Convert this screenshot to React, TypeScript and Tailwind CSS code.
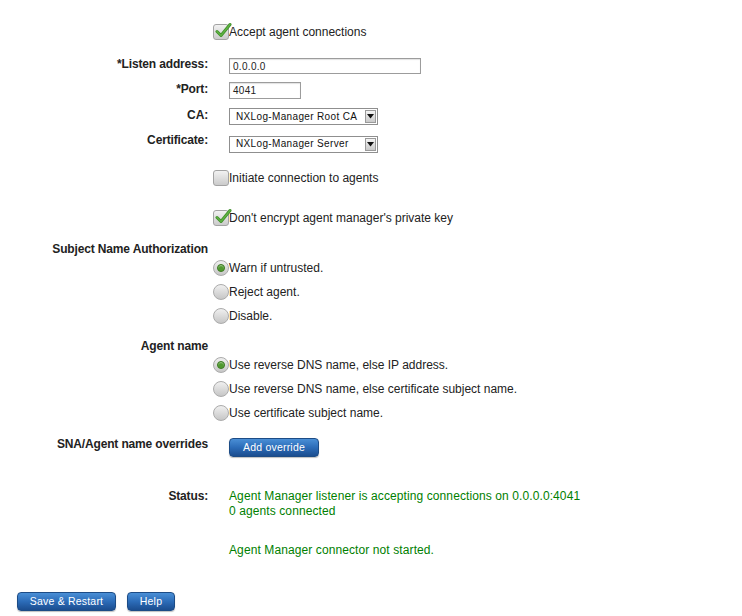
import type { ReactNode } from "react"

const font = { fontFamily: '"Liberation Sans", Arial, sans-serif' }

function Check({ checked }: { checked?: boolean }) {
  return (
    <span className="relative inline-block w-4 h-4 shrink-0 rounded-[3px] border border-[#a3a3a3] bg-gradient-to-b from-[#f2f2f2] to-[#cbcbcb]">
      {checked && (
        <svg className="absolute -top-[3px] left-[1px]" width="17" height="17" viewBox="0 0 17 17">
          <path d="M2 9.5 L6 13.5 L15 2.5" fill="none" stroke="#3f8f2a" strokeWidth="3" strokeLinecap="round" strokeLinejoin="round" />
          <path d="M2 9.5 L6 13.5 L15 2.5" fill="none" stroke="#5fb343" strokeWidth="1.3" strokeLinecap="round" strokeLinejoin="round" />
        </svg>
      )}
    </span>
  )
}

function Radio({ checked }: { checked?: boolean }) {
  return (
    <span className="inline-flex items-center justify-center w-4 h-4 shrink-0 rounded-full border border-[#ababab] bg-gradient-to-b from-[#f0f0f0] to-[#c6c6c6]">
      {checked && (
        <span className="w-[8px] h-[8px] rounded-full bg-[#4f9a2e] border border-[#3d7a24] shadow-[inset_0_1px_1px_rgba(255,255,255,0.5)]" />
      )}
    </span>
  )
}

function Row({ label, children, className = "", top = "" }: { label?: string; children?: ReactNode; className?: string; top?: string }) {
  return (
    <div className={`flex items-center ${className}`}>
      <div className={`w-[208px] shrink-0 text-right font-bold text-[12px] tracking-[-0.15px] text-[#222] ${top}`}>{label}</div>
      <div className="pl-[5px] flex items-center">{children}</div>
    </div>
  )
}

function Opt({ text, children }: { text: string; children: ReactNode }) {
  return (
    <span className="flex items-center text-[12px] text-[#222]">
      {children}
      <span>{text}</span>
    </span>
  )
}

function Select({ value }: { value: string }) {
  return (
    <div className="ml-4 flex items-center w-[149px] h-[17px] border border-[#8f8f8f] bg-white">
      <span className="flex-1 pl-[6px] text-[10px] tracking-[0.35px] text-[#111] leading-none">{value}</span>
      <span className="w-[11px] h-[13px] mr-[1px] flex items-center justify-center border border-[#9a9a9a] bg-gradient-to-b from-[#f4f4f4] to-[#c9c9c9]">
        <svg width="7" height="5" viewBox="0 0 7 5">
          <path d="M0 0 H7 L3.5 4.5 Z" fill="#111" />
        </svg>
      </span>
    </div>
  )
}

function BlueButton({ children, w }: { children: ReactNode; w: string }) {
  return (
    <button className={`${w} h-[19px] rounded-[4px] border border-[#1d4c86] bg-gradient-to-b from-[#4a8fd6] via-[#2c6cb8] to-[#1b4d8f] text-white text-[10.5px] tracking-[0.2px] leading-none shadow-[0_1px_1px_rgba(0,0,0,0.25)]`}>
      {children}
    </button>
  )
}

export default function App() {
  return (
    <div className="w-[742px] h-[616px] bg-white overflow-hidden" style={font}>
      <div className="pt-[24px]">
        <Row className="h-4">
          <Opt text="Accept agent connections"><Check checked /></Opt>
        </Row>

        <Row label="*Listen address:" className="mt-[18px] h-4" top="-mt-1">
          <div className="ml-4 w-[192px] h-4 border border-[#9c9c9c] shadow-[inset_0_1px_1px_rgba(0,0,0,0.12)] flex items-center pl-[3px] text-[10px] tracking-[0.3px] text-[#222]">0.0.0.0</div>
        </Row>

        <Row label="*Port:" className="mt-[8px] h-[17px]" top="-mt-1">
          <div className="ml-4 w-[72px] h-[17px] border border-[#9c9c9c] shadow-[inset_0_1px_1px_rgba(0,0,0,0.12)] flex items-center pl-[3px] text-[10px] tracking-[0.3px] text-[#222]">4041</div>
        </Row>

        <Row label="CA:" className="mt-[9px] h-[17px]" top="-mt-1">
          <Select value="NXLog-Manager Root CA" />
        </Row>

        <Row label="Certificate:" className="mt-[10px] h-[18px]" top="-mt-2">
          <Select value="NXLog-Manager Server" />
        </Row>

        <Row className="mt-[17px] h-4">
          <Opt text="Initiate connection to agents"><Check /></Opt>
        </Row>

        <Row className="mt-[24px] h-4">
          <Opt text="Don't encrypt agent manager's private key"><Check checked /></Opt>
        </Row>

        <Row label="Subject Name Authorization" className="mt-[15px] h-4" />
        <Row className="mt-[3px] h-4">
          <Opt text="Warn if untrusted."><Radio checked /></Opt>
        </Row>
        <Row className="mt-[8px] h-4">
          <Opt text="Reject agent."><Radio /></Opt>
        </Row>
        <Row className="mt-[8px] h-4">
          <Opt text="Disable."><Radio /></Opt>
        </Row>

        <Row label="Agent name" className="mt-[14px] h-4" />
        <Row className="mt-[3px] h-4">
          <Opt text="Use reverse DNS name, else IP address."><Radio checked /></Opt>
        </Row>
        <Row className="mt-[8px] h-4">
          <Opt text="Use reverse DNS name, else certificate subject name."><Radio /></Opt>
        </Row>
        <Row className="mt-[8px] h-4">
          <Opt text="Use certificate subject name."><Radio /></Opt>
        </Row>

        <div className="mt-[13px] flex items-start">
          <div className="w-[208px] shrink-0 pt-[4px] text-right font-bold text-[12px] tracking-[-0.15px] text-[#222] leading-[12px]">SNA/Agent name overrides</div>
          <div className="pl-[21px]">
            <BlueButton w="w-[90px]">Add override</BlueButton>
          </div>
        </div>

        <div className="mt-[31px] flex items-start">
          <div className="w-[208px] shrink-0 text-right font-bold text-[12px] tracking-[-0.15px] text-[#222] leading-[15px]">Status:</div>
          <div className="pl-[21px] text-[12px] leading-[15px] tracking-[0.1px] text-[#008000]">
            <div>Agent Manager listener is accepting connections on 0.0.0.0:4041</div>
            <div>0 agents connected</div>
            <div className="mt-[24px]">Agent Manager connector not started.</div>
          </div>
        </div>

        <div className="mt-[34px] pl-[17px] flex gap-[11px]">
          <BlueButton w="w-[99px]">Save &amp; Restart</BlueButton>
          <BlueButton w="w-[48px]">Help</BlueButton>
        </div>
      </div>
    </div>
  )
}
